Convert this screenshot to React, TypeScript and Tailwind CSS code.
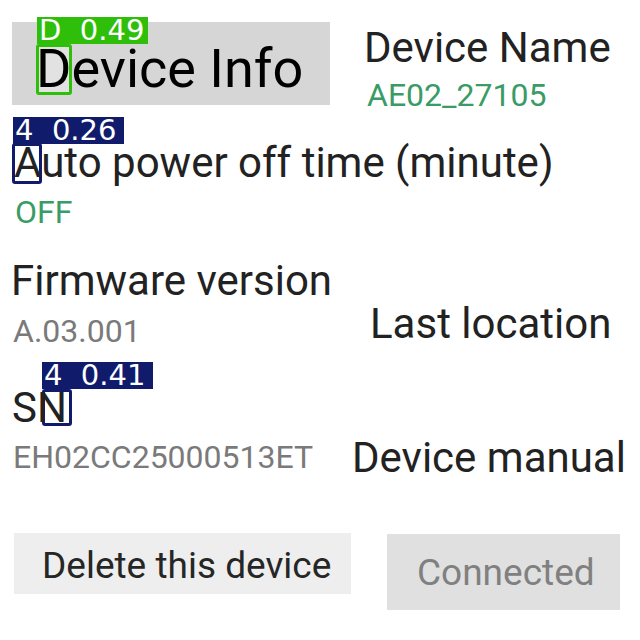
import type { ReactNode } from 'react'

type MarkProps = {
  label: string
  color: string
  box: string
  tag: string
}

// detection overlay, anchored at the baseline of the letter that follows it
function Mark({ label, color, box, tag }: MarkProps) {
  return (
    <span className="relative inline-block w-0 h-0 align-baseline">
      <span className={`absolute border-[3px] rounded-[3px] bg-white/30 ${color} ${box}`} />
      <span
        className={`absolute h-[27px] w-[111px] flex items-center pl-[2px] whitespace-pre text-white font-['DejaVu_Sans'] text-[29px] leading-none ${tag}`}
      >
        {label}
      </span>
    </span>
  )
}

function Label({ children, className = '' }: { children: ReactNode; className?: string }) {
  return <span className={`text-[42px] leading-none text-[#222222] ${className}`}>{children}</span>
}

function Value({ children, className = '' }: { children: ReactNode; className?: string }) {
  return <span className={`text-[32px] leading-none ${className}`}>{children}</span>
}

export default function App() {
  return (
    <div className="w-[640px] h-[640px] overflow-hidden bg-white font-['Roboto',sans-serif]">
      {/* header row */}
      <div className="mt-[22px] pl-[12px] flex items-start">
        <button className="w-[318px] h-[83px] bg-[#d6d6d6] flex items-start pl-[24px] pt-[20px] text-[54px] leading-none text-black">
          <span>
            <Mark
              label="D  0.49"
              color="border-[#2fbe0a]"
              box="left-0 top-[-43px] w-[36px] h-[51px]"
              tag="bg-[#2fbe0a] left-[1px] top-[-70px]"
            />
            <span className="relative">D</span>evice Info
          </span>
        </button>
        <div className="ml-[34px] mt-[5px] flex flex-col">
          <Label>Device Name</Label>
          <Value className="mt-[10px] pl-[3px] text-[#3a9b66]">AE02_27105</Value>
        </div>
      </div>

      {/* auto power off */}
      <div className="mt-[31px] pl-[14px] flex flex-col items-start">
        <Label>
          <Mark
            label="4  0.26"
            color="border-[#101c6b]"
            box="left-[-2px] top-[-34px] w-[30px] h-[41px]"
            tag="bg-[#101c6b] left-[-1px] top-[-60px]"
          />
          <span className="relative">A</span>uto power off time (minute)
        </Label>
        <Value className="mt-[12px] pl-[1px] text-[#3a9b66]">OFF</Value>
      </div>

      {/* info grid */}
      <div className="mt-[32px] flex items-start">
        <div className="w-[340px] pl-[11px] flex flex-col items-start">
          <Label>Firmware version</Label>
          <Value className="mt-[13px] pl-[2px] text-[#7a7a7a]">A.03.001</Value>
          <Label className="mt-[40px] pl-[1px]">
            S
            <Mark
              label="4  0.41"
              color="border-[#101c6b]"
              box="left-[5px] top-[-33px] w-[30px] h-[37px]"
              tag="bg-[#101c6b] left-[5px] top-[-60px]"
            />
            <span className="relative">N</span>
          </Label>
          <Value className="mt-[12px] pl-[2px] text-[#7a7a7a]">EH02CC25000513ET</Value>
        </div>
        <div className="flex flex-col">
          <Label className="mt-[43px] ml-[30px]">Last location</Label>
          <Label className="mt-[92px] ml-[12px]">Device manual</Label>
        </div>
      </div>

      {/* actions */}
      <div className="mt-[54px] pl-[14px] flex items-start">
        <button className="w-[337px] h-[61px] bg-[#eeeeee] flex items-center pl-[28px] pt-[4px] text-[37px] leading-none text-[#262626]">
          Delete this device
        </button>
        <button className="mt-[1px] ml-[36px] w-[233px] h-[76px] bg-[#e0e0e0] flex items-center pl-[30px] text-[37px] leading-none text-[#808080]">
          Connected
        </button>
      </div>
    </div>
  )
}
